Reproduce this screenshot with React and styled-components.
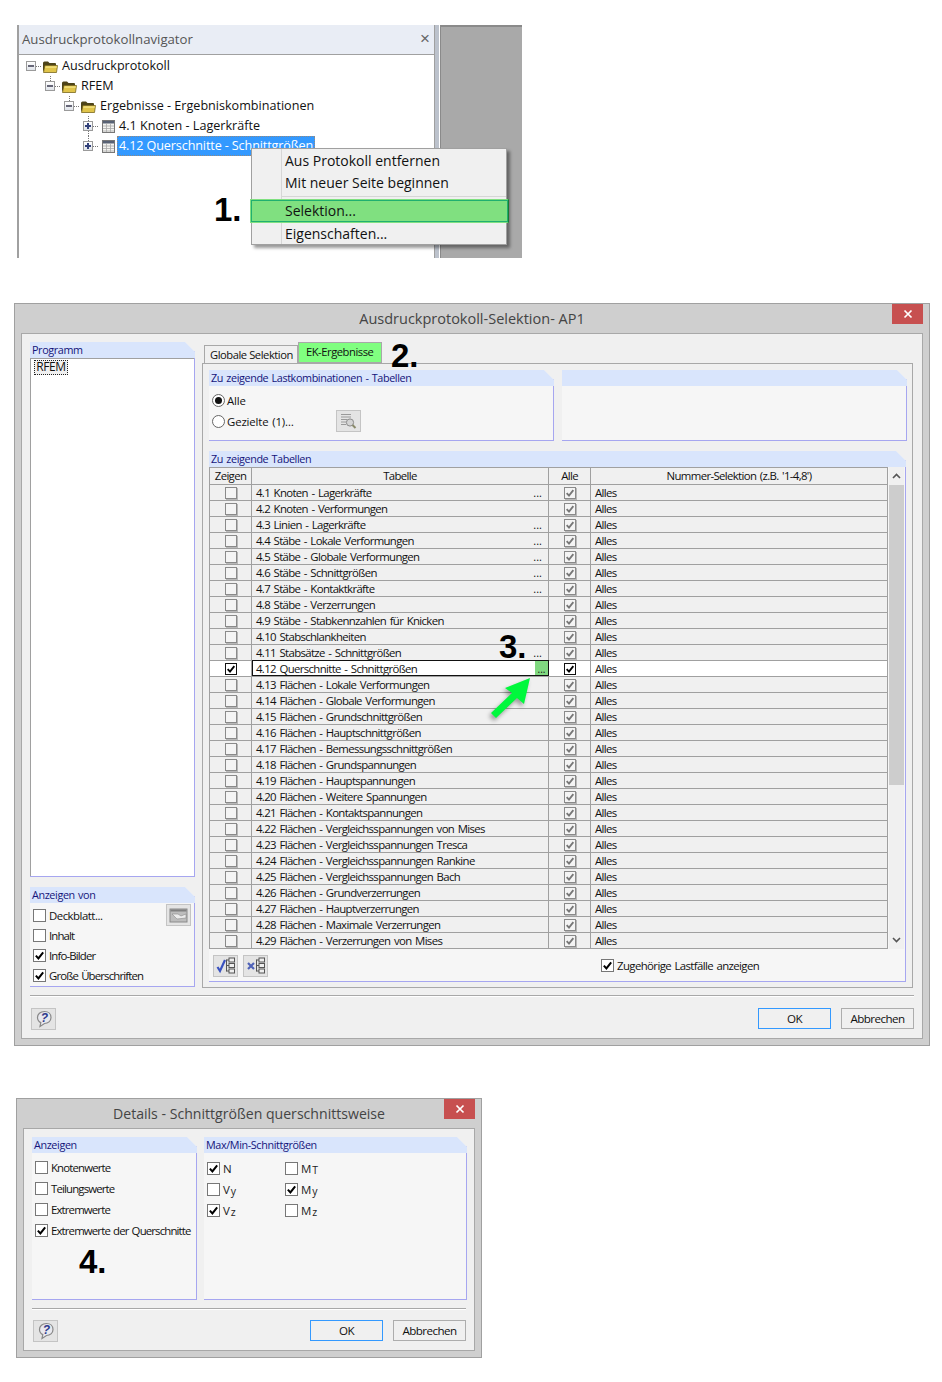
import styled, { createGlobalStyle } from "styled-components";

const GlobalStyle = createGlobalStyle`
  html, body {
    margin: 0;
    padding: 0;
    background: #fff;
  }
  * {
    box-sizing: border-box;
  }
`;

const UI_FONT = `"Open Sans", "Noto Sans", sans-serif`;

const Page = styled.div`
  width: 942px;
  height: 1382px;
  padding-top: 25px;
  font-family: ${UI_FONT};
  color: #111;
  overflow: hidden;
`;

/* annotation numbers */
const Marker = styled.div`
  position: absolute;
  left: ${(p) => p.$x}px;
  top: ${(p) => p.$y}px;
  font-family: "Liberation Sans", sans-serif;
  font-size: 33px;
  font-weight: 700;
  line-height: 33px;
  color: #000;
`;

/* navigator */
const NavBlock = styled.div`
  position: relative;
  display: flex;
  width: 505px;
  height: 233px;
  margin-left: 17px;
`;
const NavPanel = styled.div`
  width: 418px;
  display: flex;
  flex-direction: column;
  border-left: 2px solid #a0a0a0;
  border-right: 1px solid #a0a0a0;
`;
const NavTitle = styled.div`
  height: 30px;
  padding: 0 4px 2px 3px;
  display: flex;
  align-items: center;
  justify-content: space-between;
  background: #e9edf5;
  border-bottom: 1px solid #a0a0a0;
  font-size: 13.2px;
  color: #555;
`;
const NavClose = styled.span`
  font-family: "Liberation Sans", sans-serif;
  font-size: 17px;
  color: #666;
`;
const Tree = styled.div`
  flex: 1;
  padding-top: 1px;
  padding-left: 7px;
  background: #fff;
`;
const TreeRow = styled.div`
  position: relative;
  height: 20px;
  display: flex;
  align-items: center;
  margin-left: ${(p) => p.$level * 19}px;
  font-size: 12.6px;
  white-space: nowrap;
  &::before {
    content: "";
    display: ${(p) => (p.$level > 0 ? "block" : "none")};
    position: absolute;
    left: 5px;
    top: 0;
    height: 5px;
    border-left: 1px dotted #777;
  }
  &::after {
    content: "";
    display: ${(p) => (p.$below ? "block" : "none")};
    position: absolute;
    left: 5px;
    top: 15px;
    height: 5px;
    border-left: 1px dotted #777;
  }
`;
const Expander = styled.span`
  width: 10px;
  height: 10px;
  flex-shrink: 0;
  border: 1px solid #9a9a9a;
  background: linear-gradient(#fff, #dfe3ea);
  position: relative;
  &::before {
    content: "";
    position: absolute;
    left: 1px;
    top: 3px;
    width: 6px;
    height: 2px;
    background: ${(p) => (p.$open ? "#667" : "#33417a")};
  }
  &::after {
    content: "";
    display: ${(p) => (p.$open ? "none" : "block")};
    position: absolute;
    left: 3px;
    top: 1px;
    width: 2px;
    height: 6px;
    background: #33417a;
  }
`;
const Dots = styled.span`
  width: 5px;
  margin-right: 1px;
  border-top: 1px dotted #777;
`;
const TreeLabel = styled.span`
  margin-left: ${(p) => (p.$selected ? "2px" : "4px")};
  padding: ${(p) => (p.$selected ? "0 2px" : "0")};
  height: 20px;
  line-height: 20px;
  letter-spacing: ${(p) => (p.$selected ? "-0.12px" : "0")};
  color: ${(p) => (p.$selected ? "#fff" : "#111")};
  background: ${(p) => (p.$selected ? "#3399ff" : "transparent")};
  outline: ${(p) => (p.$selected ? "1px dotted rgba(208, 128, 48, 0.6)" : "none")};
  outline-offset: -1px;
`;
const NavStrip = styled.div`
  width: 5px;
  background: linear-gradient(90deg, #bcc2cc 70%, #fff 70%);
`;
const NavGray = styled.div`
  flex: 1;
  background: #a9a9a9;
  border-top: 2px solid #8a8a8a;
  border-left: 1px solid #8a8a8a;
`;
const Menu = styled.div`
  position: absolute;
  left: 234px;
  top: 123px;
  width: 256px;
  height: 97px;
  padding-top: 1px;
  background: #f0f0f0;
  border: 1px solid #a0a0a0;
  box-shadow: 3px 3px 3px rgba(0, 0, 0, 0.4);
  font-size: 14px;
  &::before {
    content: "";
    position: absolute;
    left: 29px;
    top: 0;
    bottom: 0;
    width: 1px;
    background: #d6d6d6;
  }
`;
const MenuItem = styled.div`
  position: relative;
  height: 22px;
  line-height: 22px;
  padding-left: 33px;
  color: #111;
`;
const MenuSep = styled.div`
  height: 1px;
  margin: 2px 0 2px 30px;
  background: #d6d6d6;
`;
const MenuHighlight = styled(MenuItem)`
  height: 24px;
  line-height: 21px;
  margin: 0 -3px 0 -2px;
  padding-left: 34px;
  background: #80e080;
  border: 1px solid #80e080;
  outline: 1px solid #20b070;
  outline-offset: -2px;
  border-right: 2px solid #1a7a30;
`;

/* dialogs */
const Dialog = styled.div`
  position: relative;
  width: ${(p) => p.$w}px;
  height: ${(p) => p.$h}px;
  margin-top: ${(p) => p.$top}px;
  margin-left: ${(p) => p.$left}px;
  display: flex;
  flex-direction: column;
  padding: 0 6px 6px;
  background: #cfcfcf;
  border: 1px solid #a0a0a0;
`;
const TitleBar = styled.div`
  height: 29px;
  flex-shrink: 0;
  display: flex;
  align-items: center;
  justify-content: center;
  font-size: ${(p) => p.$size}px;
  color: #444;
`;
const CloseButton = styled.div`
  position: absolute;
  right: 6px;
  top: 0;
  width: 31px;
  height: 20px;
  display: flex;
  align-items: center;
  justify-content: center;
  background: #c75050;
  color: #fff;
`;
const Inner = styled.div`
  flex: 1;
  min-height: 0;
  display: flex;
  flex-direction: column;
  padding: 8px 8px 9px;
  background: #f0f0f0;
  border: 1px solid #a8a8a8;
`;
const Columns = styled.div`
  flex: 1;
  min-height: 0;
  display: flex;
  gap: 7px;
`;
const LeftColumn = styled.div`
  width: 165px;
  flex-shrink: 0;
  display: flex;
  flex-direction: column;
  gap: 10px;
  padding-bottom: 1px;
`;
const RightColumn = styled.div`
  width: 711px;
  flex-shrink: 0;
  display: flex;
  flex-direction: column;
`;
const Group = styled.div`
  display: flex;
  flex-direction: column;
  width: ${(p) => (p.$w ? `${p.$w}px` : "auto")};
  height: ${(p) => (p.$h ? `${p.$h}px` : "auto")};
  flex: ${(p) => (p.$grow ? "1" : "none")};
  min-height: 0;
  background: #f6f6f6;
  border-right: 1px solid #a6a6f0;
  border-bottom: 1px solid #a6a6f0;
  clip-path: polygon(0 0, calc(100% - 10px) 0, 100% 10px, 100% 100%, 0 100%);
`;
const GroupHead = styled.div`
  height: 16px;
  flex-shrink: 0;
  padding-left: 2px;
  margin-right: -1px;
  background: #d9e5fc;
  font-size: 10.8px;
  letter-spacing: -0.38px;
  word-spacing: 0.8px;
  line-height: 16px;
  color: #14147a;
  white-space: nowrap;
`;
const ProgramList = styled.div`
  flex: 1;
  padding: 1px 0 0 3px;
  background: #fff;
  border: 1px solid #a0a0a0;
  border-right: none;
  border-bottom: none;
`;
const ProgramItem = styled.div`
  width: 34px;
  height: 15px;
  line-height: 14px;
  text-align: center;
  font-size: 12px;
  letter-spacing: -0.4px;
  background: #f0f0f0;
  outline: 1px dotted #222;
  outline-offset: -1px;
`;
const OptionList = styled.div`
  flex: 1;
  display: flex;
  flex-direction: column;
  padding: ${(p) => p.$pad};
  gap: ${(p) => p.$gap}px;
`;
const Option = styled.label`
  display: flex;
  align-items: center;
  height: 14px;
  gap: 3px;
  font-size: 11.4px;
  letter-spacing: -0.85px;
  word-spacing: 1px;
  white-space: nowrap;
  color: #111;
`;
const RadioOption = styled(Option)`
  letter-spacing: -0.15px;
`;
const CheckFrame = styled.span`
  width: 13px;
  height: 13px;
  flex-shrink: 0;
  display: flex;
  align-items: center;
  justify-content: center;
  background: #fff;
  border: 1px solid #777;
`;
const CellCheckFrame = styled.span`
  width: 12px;
  height: 12px;
  display: flex;
  align-items: center;
  justify-content: center;
  background: ${(p) => (p.$strong ? "#fff" : "#f4f4f4")};
  border: 1px solid ${(p) => (p.$strong ? "#111" : "#8a8a8a")};
  box-shadow: ${(p) => (p.$strong ? "none" : "1px 1px 0 #b8b8b8")};
`;
const RadioFrame = styled.span`
  width: 13px;
  height: 13px;
  flex-shrink: 0;
  margin-right: -1px;
  border-radius: 50%;
  display: flex;
  align-items: center;
  justify-content: center;
  background: #fff;
  border: 1px solid #666;
  &::after {
    content: "";
    display: ${(p) => (p.$on ? "block" : "none")};
    width: 7px;
    height: 7px;
    border-radius: 50%;
    background: #111;
  }
`;
const Sub = styled.span`
  font-size: 10.5px;
  position: relative;
  top: 1px;
  margin-left: 1px;
`;
const Symbol = styled.span`
  font-size: 11.5px;
  letter-spacing: 0;
  color: #222;
`;
const IconButton = styled.button`
  width: 25px;
  height: 22px;
  flex-shrink: 0;
  padding: 0;
  margin-left: ${(p) => (p.$ml ? `${p.$ml}px` : "0")};
  display: flex;
  align-items: center;
  justify-content: center;
  background: #e4e4e4;
  border: 1px solid #c4c4c4;
`;
const PushedIconButton = styled(IconButton)`
  margin-left: auto;
`;
const DeckblattOption = styled(Option)`
  letter-spacing: -0.5px;
`;

/* selection tabs */
const Tabs = styled.div`
  height: 21px;
  margin-top: 1px;
  margin-bottom: -1px;
  padding-left: 2px;
  display: flex;
  align-items: flex-end;
`;
const Tab = styled.div`
  height: ${(p) => (p.$active ? 21 : 19)}px;
  margin-bottom: ${(p) => (p.$active ? 1 : 0)}px;
  padding: ${(p) => (p.$active ? "0 8px 2px 7px" : "0 4px 2px 5px")};
  display: flex;
  align-items: center;
  font-size: 11.2px;
  letter-spacing: -0.45px;
  background: ${(p) => (p.$active ? "#80ff80" : "#f0f0f0")};
  border: 1px solid #a8a8a8;
  border-bottom: ${(p) => (p.$active ? "1px solid #a8a8a8" : "none")};
`;
const TabPanel = styled.div`
  position: relative;
  flex: 1;
  display: flex;
  flex-direction: column;
  gap: 10px;
  padding: 6px 6px 5px;
  background: #f0f0f0;
  border: 1px solid #a8a8a8;
`;
const TopGroups = styled.div`
  display: flex;
  gap: 8px;
`;
const TableArea = styled.div`
  flex: 1;
  min-height: 0;
  display: flex;
  gap: 1px;
`;
const Table = styled.div`
  width: 679px;
  border-left: 1px solid #a0a0a0;
  background: #f0f0f0;
`;
const Row = styled.div`
  display: grid;
  grid-template-columns: 42px 297px 42px 1fr;
  height: ${(p) => (p.$head ? 18 : 16)}px;
  border-top: ${(p) => (p.$head ? "1px solid #a0a0a0" : "none")};
  border-bottom: 1px solid #a0a0a0;
  background: ${(p) => (p.$selected ? "#fff" : "#f0f0f0")};
  font-size: 11.4px;
  letter-spacing: -0.65px;
  word-spacing: 1.2px;
  color: #111;
`;
const Cell = styled.div`
  position: relative;
  display: flex;
  align-items: center;
  justify-content: ${(p) => (p.$center ? "center" : "flex-start")};
  padding-left: ${(p) => (p.$center ? 0 : 4)}px;
  padding-bottom: ${(p) => (p.$head ? 4 : 0)}px;
  border-right: 1px solid #a0a0a0;
  white-space: nowrap;
`;
const ActiveCell = styled(Cell)`
  border: 1px solid #111;
  margin: -1px 0 0 0;
  height: 16px;
  padding-left: 3px;
  background: #fff;
`;
const CellDots = styled.span`
  position: absolute;
  right: 6px;
  top: 0;
  letter-spacing: 0;
  font-size: 11px;
`;
const CellButton = styled.span`
  position: absolute;
  right: 0;
  top: 0;
  width: 13px;
  height: 14px;
  display: flex;
  align-items: flex-end;
  justify-content: center;
  font-size: 10px;
  line-height: 12px;
  letter-spacing: 0;
  background: #80d880;
`;
const Scrollbar = styled.div`
  width: 15px;
  display: flex;
  flex-direction: column;
  background: #f0f0f0;
`;
const ScrollArrow = styled.div`
  height: 18px;
  display: flex;
  align-items: center;
  justify-content: center;
`;
const ScrollThumb = styled.div`
  height: 300px;
  background: #cdcdcd;
`;
const ScrollTrack = styled.div`
  flex: 1;
`;
const TableFooter = styled.div`
  height: 32px;
  flex-shrink: 0;
  display: flex;
  align-items: center;
  padding: 1px 0 0 4px;
  gap: 5px;
`;
const FooterOption = styled(Option)`
  margin-left: 328px;
  letter-spacing: -0.6px;
`;

const Separator = styled.div`
  height: 2px;
  flex-shrink: 0;
  margin-top: ${(p) => p.$top}px;
  background: linear-gradient(#a8a8a8 50%, #fff 50%);
`;
const Footer = styled.div`
  display: flex;
  align-items: center;
  gap: 10px;
  height: 21px;
  flex-shrink: 0;
  margin-top: ${(p) => p.$top}px;
  padding: 0 0 0 1px;
`;
const Button = styled.button`
  width: 73px;
  height: 21px;
  padding: 0;
  margin-left: ${(p) => (p.$push ? "auto" : "0")};
  font-family: ${UI_FONT};
  font-size: 11.6px;
  letter-spacing: -0.55px;
  color: #111;
  background: #f0f0f0;
  border: 1px solid ${(p) => (p.$primary ? "#3399ff" : "#adadad")};
`;
const SymbolGrid = styled.div`
  display: grid;
  grid-template-columns: 78px 78px;
  row-gap: 7px;
  padding: 8px 3px 0;
`;
const TableGlyph = styled.svg`
  flex-shrink: 0;
  margin-left: 3px;
`;
const FolderGlyph = styled.svg`
  flex-shrink: 0;
`;
const Arrow = styled.svg`
  position: absolute;
  left: 472px;
  top: 372px;
  overflow: visible;
  filter: drop-shadow(-2px 3px 2px rgba(0, 0, 0, 0.35));
`;

const Folder = () => (
  <FolderGlyph width="16" height="13" viewBox="0 0 16 13">
    <path d="M1 12 V3 Q1 1.5 2.5 1.5 H6 L7.5 3 H13 Q14 3 14 4 V6 L4 6 Z" fill="#4e4418" />
    <path d="M3 5.5 H15.5 L14.5 12.5 H1.5 Z" fill="#e0c44a" stroke="#7a6820" strokeWidth="0.8" />
    <path d="M3.6 6.3 H14.8 L14.5 8 H3.2 Z" fill="#efdc78" />
  </FolderGlyph>
);

const TableIcon = () => (
  <TableGlyph width="13" height="13" viewBox="0 0 13 13">
    <rect x="0.5" y="0.5" width="12" height="12" fill="#f4f4f0" stroke="#777" />
    <rect x="1" y="1" width="11" height="2.5" fill="#586274" />
    <path d="M1 6 H12 M1 8.5 H12 M1 11 H12 M4.5 3.5 V12 M8.5 3.5 V12" stroke="#a8a8a8" strokeWidth="0.8" />
  </TableGlyph>
);

const Tick = ({ color = "#000", size = 11 }) => (
  <svg width={size} height={size} viewBox="0 0 12 12">
    <path d="M2 6.2 L4.8 9.2 L10 2.6" fill="none" stroke={color} strokeWidth="2.2" />
  </svg>
);

const Check = ({ on }) => <CheckFrame>{on && <Tick />}</CheckFrame>;

const CellCheck = ({ on, strong }) => (
  <CellCheckFrame $strong={strong}>{on && <Tick color={strong ? "#000" : "#777"} size={10} />}</CellCheckFrame>
);

const CloseIcon = () => (
  <svg width="10" height="10" viewBox="0 0 10 10">
    <path d="M1.5 1.5 L8.5 8.5 M8.5 1.5 L1.5 8.5" stroke="#fff" strokeWidth="1.7" />
  </svg>
);

const HelpIcon = () => (
  <svg width="18" height="18" viewBox="0 0 18 18">
    <path d="M9.5 1.5 C13.5 1.5 16 4.2 16 7.5 C16 11.2 13 13.5 9.5 13.5 L5 16.5 L5.8 12.6 C3.5 11.5 2.5 9.7 2.5 7.5 C2.5 4.2 5.2 1.5 9.5 1.5 Z" fill="#e8e8ee" stroke="#888" strokeWidth="1.2" />
    <text x="9.5" y="12" textAnchor="middle" fontFamily="Liberation Sans" fontStyle="italic" fontSize="12" fontWeight="700" fill="#2e3a8c">?</text>
  </svg>
);

const FindIcon = () => (
  <svg width="18" height="18" viewBox="0 0 18 18">
    <path d="M2 2.5 H12 M2 5 H12 M2 7.5 H8 M2 10 H7 M2 12.5 H7" stroke="#9a9a9a" />
    <circle cx="11" cy="10.5" r="3.6" fill="#d4d4d4" stroke="#8a8a8a" />
    <path d="M13.5 13 L16.5 16" stroke="#8a8a6a" strokeWidth="2" />
  </svg>
);

const CoverIcon = () => (
  <svg width="20" height="15" viewBox="0 0 20 15">
    <rect x="1" y="1" width="17" height="13" fill="#bdbdbd" stroke="#8a8a8a" />
    <rect x="1.5" y="1.5" width="16" height="2" fill="#808080" />
    <path d="M3 6 H9 L12 8 L17 6 L17 10 L8 11 Z" fill="#ececec" stroke="#8a8a8a" strokeWidth="0.6" />
  </svg>
);

const ListMarkIcon = ({ cross }) => (
  <svg width="20" height="18" viewBox="0 0 20 18">
    {cross ? (
      <path d="M2 6 L8 12 M8 6 L2 12" stroke="#4f62b8" strokeWidth="2.2" />
    ) : (
      <path d="M1.5 10 L4 14 L9 3" fill="none" stroke="#3a52c0" strokeWidth="2.2" />
    )}
    <path d="M10.5 2.5 V14.5 M10.5 3 H13 M10.5 8.5 H13 M10.5 14 H13" stroke="#555" fill="none" />
    <rect x="13" y="1" width="5.5" height="4" fill="#eee" stroke="#555" />
    <rect x="13" y="6.5" width="5.5" height="4" fill="#eee" stroke="#555" />
    <rect x="13" y="12" width="5.5" height="4" fill="#eee" stroke="#555" />
  </svg>
);

const Chevron = ({ up }) => (
  <svg width="9" height="6" viewBox="0 0 9 6">
    <path d={up ? "M1 5 L4.5 1.5 L8 5" : "M1 1 L4.5 4.5 L8 1"} fill="none" stroke="#555" strokeWidth="1.6" />
  </svg>
);

const TABLES = [
  ["4.1 Knoten - Lagerkräfte", true],
  ["4.2 Knoten - Verformungen"],
  ["4.3 Linien - Lagerkräfte", true],
  ["4.4 Stäbe - Lokale Verformungen", true],
  ["4.5 Stäbe - Globale Verformungen", true],
  ["4.6 Stäbe - Schnittgrößen", true],
  ["4.7 Stäbe - Kontaktkräfte", true],
  ["4.8 Stäbe - Verzerrungen"],
  ["4.9 Stäbe - Stabkennzahlen für Knicken"],
  ["4.10 Stabschlankheiten"],
  ["4.11 Stabsätze - Schnittgrößen", true],
  ["4.12 Querschnitte - Schnittgrößen"],
  ["4.13 Flächen - Lokale Verformungen"],
  ["4.14 Flächen - Globale Verformungen"],
  ["4.15 Flächen - Grundschnittgrößen"],
  ["4.16 Flächen - Hauptschnittgrößen"],
  ["4.17 Flächen - Bemessungsschnittgrößen"],
  ["4.18 Flächen - Grundspannungen"],
  ["4.19 Flächen - Hauptspannungen"],
  ["4.20 Flächen - Weitere Spannungen"],
  ["4.21 Flächen - Kontaktspannungen"],
  ["4.22 Flächen - Vergleichsspannungen von Mises"],
  ["4.23 Flächen - Vergleichsspannungen Tresca"],
  ["4.24 Flächen - Vergleichsspannungen Rankine"],
  ["4.25 Flächen - Vergleichsspannungen Bach"],
  ["4.26 Flächen - Grundverzerrungen"],
  ["4.27 Flächen - Hauptverzerrungen"],
  ["4.28 Flächen - Maximale Verzerrungen"],
  ["4.29 Flächen - Verzerrungen von Mises"],
];

const TREE = [
  { level: 0, open: true, label: "Ausdruckprotokoll" },
  { level: 1, open: true, label: "RFEM" },
  { level: 2, open: true, label: "Ergebnisse - Ergebniskombinationen" },
  { level: 3, label: "4.1 Knoten - Lagerkräfte", below: true },
  { level: 3, label: "4.12 Querschnitte - Schnittgrößen", selected: true },
];

const Navigator = () => (
  <NavBlock>
    <NavPanel>
      <NavTitle>
        Ausdruckprotokollnavigator
        <NavClose>×</NavClose>
      </NavTitle>
      <Tree>
        {TREE.map((node) => (
          <TreeRow key={node.label} $level={node.level} $below={node.below}>
            <Expander $open={node.open} />
            <Dots />
            {node.open ? <Folder /> : <TableIcon />}
            <TreeLabel $selected={node.selected}>{node.label}</TreeLabel>
          </TreeRow>
        ))}
      </Tree>
    </NavPanel>
    <NavStrip />
    <NavGray />
    <Menu>
      <MenuItem>Aus Protokoll entfernen</MenuItem>
      <MenuItem>Mit neuer Seite beginnen</MenuItem>
      <MenuSep />
      <MenuHighlight>Selektion...</MenuHighlight>
      <MenuItem>Eigenschaften...</MenuItem>
    </Menu>
    <Marker $x={197} $y={168}>1.</Marker>
  </NavBlock>
);

const SelectionDialog = () => (
  <Dialog $w={916} $h={743} $top={45} $left={14}>
    <TitleBar $size={14.5}>Ausdruckprotokoll-Selektion- AP1</TitleBar>
    <CloseButton>
      <CloseIcon />
    </CloseButton>
    <Inner>
      <Columns>
        <LeftColumn>
          <Group $grow>
            <GroupHead>Programm</GroupHead>
            <ProgramList>
              <ProgramItem>RFEM</ProgramItem>
            </ProgramList>
          </Group>
          <Group $h={100}>
            <GroupHead>Anzeigen von</GroupHead>
            <OptionList $pad="5px 3px 0" $gap={6}>
              <DeckblattOption>
                <Check />
                Deckblatt...
                <PushedIconButton>
                  <CoverIcon />
                </PushedIconButton>
              </DeckblattOption>
              <Option>
                <Check />
                Inhalt
              </Option>
              <Option>
                <Check on />
                Info-Bilder
              </Option>
              <Option>
                <Check on />
                Große Überschriften
              </Option>
            </OptionList>
          </Group>
        </LeftColumn>
        <RightColumn>
          <Tabs>
            <Tab>Globale Selektion</Tab>
            <Tab $active>EK-Ergebnisse</Tab>
          </Tabs>
          <TabPanel>
            <TopGroups>
              <Group $w={345} $h={71}>
                <GroupHead>Zu zeigende Lastkombinationen - Tabellen</GroupHead>
                <OptionList $pad="7px 3px 0" $gap={7}>
                  <RadioOption>
                    <RadioFrame $on />
                    Alle
                  </RadioOption>
                  <RadioOption>
                    <RadioFrame />
                    Gezielte (1)…
                    <IconButton $ml={39}>
                      <FindIcon />
                    </IconButton>
                  </RadioOption>
                </OptionList>
              </Group>
              <Group $w={345} $h={71}>
                <GroupHead />
              </Group>
            </TopGroups>
            <Group $grow>
              <GroupHead>Zu zeigende Tabellen</GroupHead>
              <TableArea>
                <Table>
                  <Row $head>
                    <Cell $center $head>Zeigen</Cell>
                    <Cell $center $head>Tabelle</Cell>
                    <Cell $center $head>Alle</Cell>
                    <Cell $center $head>Nummer-Selektion (z.B. '1-4,8')</Cell>
                  </Row>
                  {TABLES.map(([name, dots], i) => {
                    const selected = i === 11;
                    const NameCell = selected ? ActiveCell : Cell;
                    return (
                      <Row key={name} $selected={selected}>
                        <Cell $center>
                          <CellCheck on={selected} strong={selected} />
                        </Cell>
                        <NameCell>
                          {name}
                          {dots && <CellDots>...</CellDots>}
                          {selected && <CellButton>...</CellButton>}
                        </NameCell>
                        <Cell $center>
                          <CellCheck on strong={selected} />
                        </Cell>
                        <Cell>Alles</Cell>
                      </Row>
                    );
                  })}
                </Table>
                <Scrollbar>
                  <ScrollArrow>
                    <Chevron up />
                  </ScrollArrow>
                  <ScrollThumb />
                  <ScrollTrack />
                  <ScrollArrow>
                    <Chevron />
                  </ScrollArrow>
                </Scrollbar>
              </TableArea>
              <TableFooter>
                <IconButton>
                  <ListMarkIcon />
                </IconButton>
                <IconButton>
                  <ListMarkIcon cross />
                </IconButton>
                <FooterOption>
                  <Check on />
                  Zugehörige Lastfälle anzeigen
                </FooterOption>
              </TableFooter>
            </Group>
          </TabPanel>
        </RightColumn>
      </Columns>
      <Separator $top={7} />
      <Footer $top={11}>
        <IconButton>
          <HelpIcon />
        </IconButton>
        <Button $push $primary>OK</Button>
        <Button>Abbrechen</Button>
      </Footer>
    </Inner>
    <Marker $x={376} $y={35}>2.</Marker>
    <Marker $x={484} $y={326}>3.</Marker>
    <Arrow width="50" height="50" viewBox="0 0 50 50">
      <path d="M43 2 L18 12 L25 17 L4 37 L9 42 L30 22 L37 28 Z" fill="#00f83c" />
    </Arrow>
  </Dialog>
);

const DetailsDialog = () => (
  <Dialog $w={466} $h={260} $top={52} $left={16}>
    <TitleBar $size={14.1}>Details - Schnittgrößen querschnittsweise</TitleBar>
    <CloseButton>
      <CloseIcon />
    </CloseButton>
    <Inner>
      <Columns>
        <Group $w={165} $h={163}>
          <GroupHead>Anzeigen</GroupHead>
          <OptionList $pad="7px 3px 0" $gap={7}>
            <Option>
              <Check />
              Knotenwerte
            </Option>
            <Option>
              <Check />
              Teilungswerte
            </Option>
            <Option>
              <Check />
              Extremwerte
            </Option>
            <Option>
              <Check on />
              Extremwerte der Querschnitte
            </Option>
          </OptionList>
        </Group>
        <Group $w={263} $h={163}>
          <GroupHead>Max/Min-Schnittgrößen</GroupHead>
          <SymbolGrid>
            <Option>
              <Check on />
              <Symbol>N</Symbol>
            </Option>
            <Option>
              <Check />
              <Symbol>M<Sub>T</Sub></Symbol>
            </Option>
            <Option>
              <Check />
              <Symbol>V<Sub>y</Sub></Symbol>
            </Option>
            <Option>
              <Check on />
              <Symbol>M<Sub>y</Sub></Symbol>
            </Option>
            <Option>
              <Check on />
              <Symbol>V<Sub>z</Sub></Symbol>
            </Option>
            <Option>
              <Check />
              <Symbol>M<Sub>z</Sub></Symbol>
            </Option>
          </SymbolGrid>
        </Group>
      </Columns>
      <Separator $top={8} />
      <Footer $top={10}>
        <IconButton>
          <HelpIcon />
        </IconButton>
        <Button $push $primary>OK</Button>
        <Button>Abbrechen</Button>
      </Footer>
    </Inner>
    <Marker $x={62} $y={146}>4.</Marker>
  </Dialog>
);

export default function App() {
  return (
    <Page>
      <GlobalStyle />
      <Navigator />
      <SelectionDialog />
      <DetailsDialog />
    </Page>
  );
}
